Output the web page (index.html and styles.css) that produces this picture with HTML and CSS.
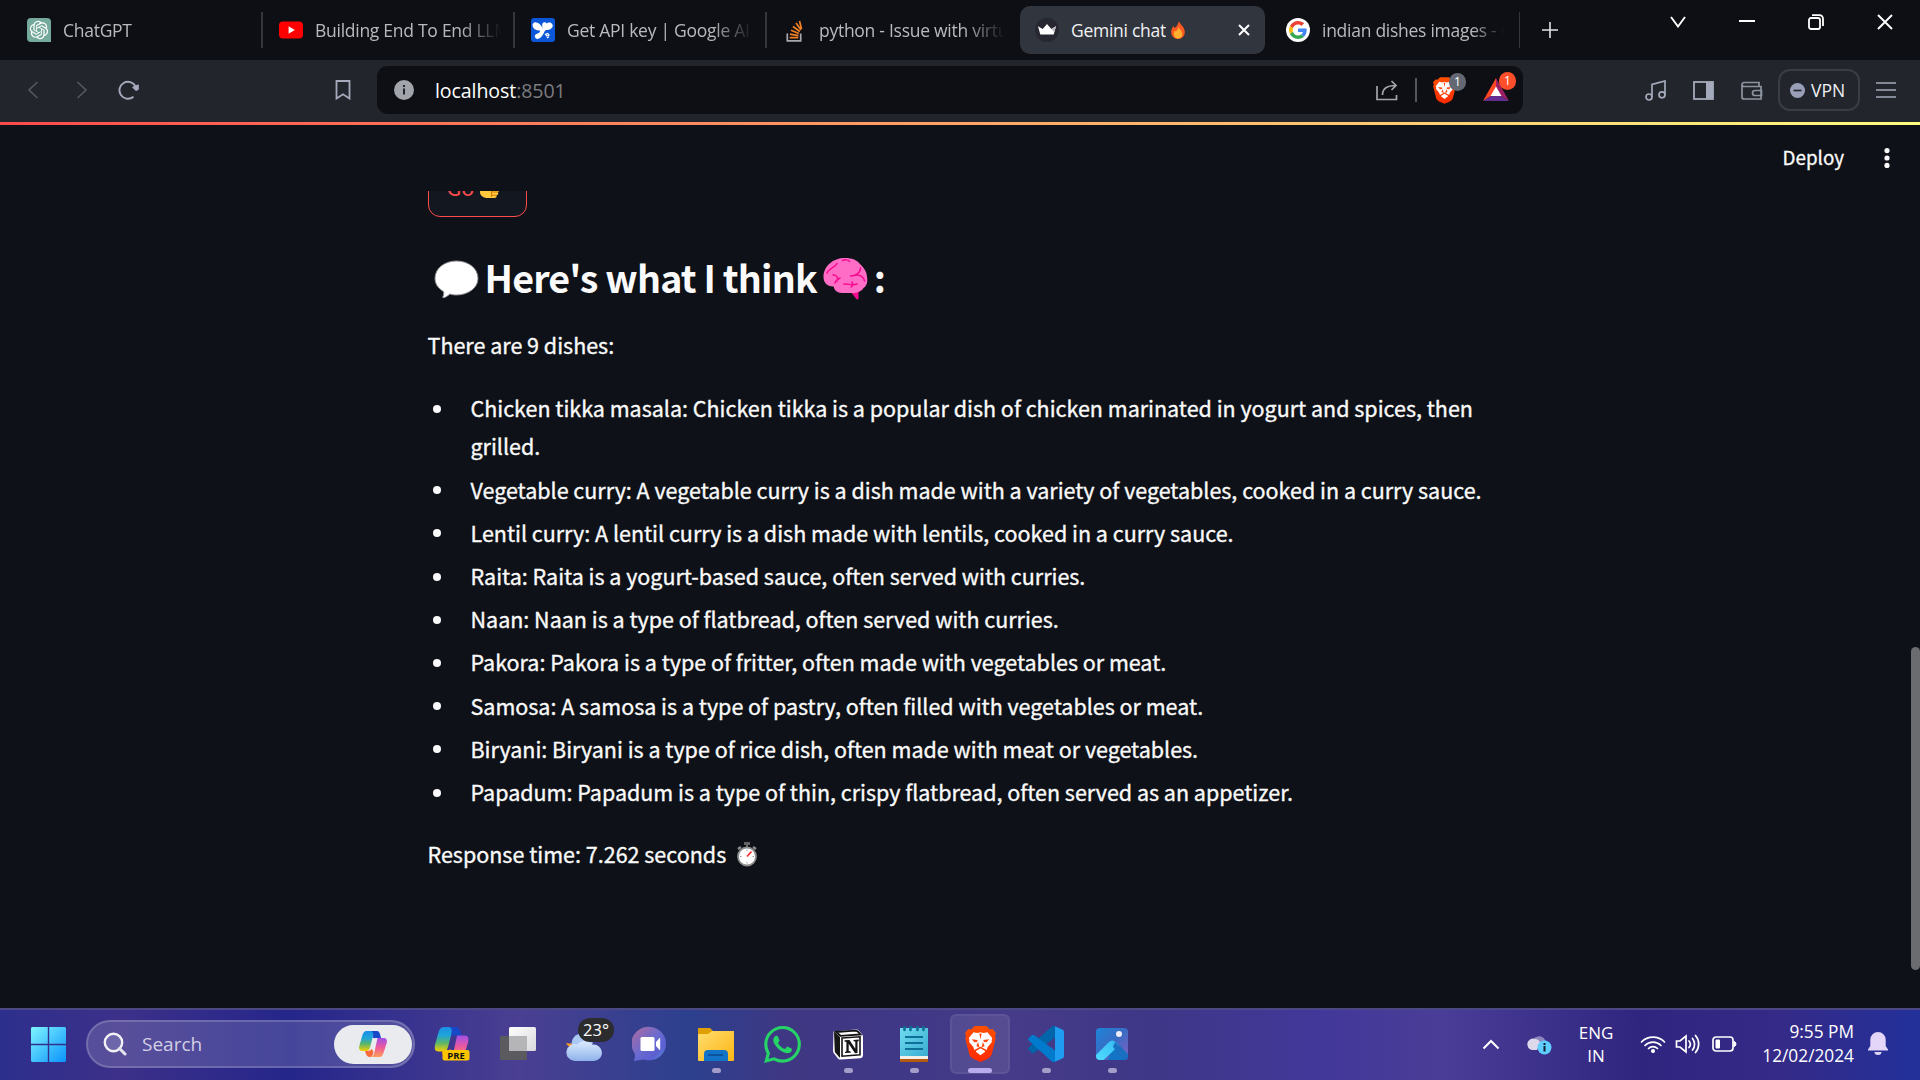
FILE: index.html
```html
<!DOCTYPE html>
<html lang="en">
<head>
<meta charset="utf-8">
<title>Gemini chat</title>
<link rel="stylesheet" href="styles.css">
</head>
<body>
<svg class="defs" aria-hidden="true">
  <defs>
    <linearGradient id="win" gradientUnits="userSpaceOnUse" x1="0" y1="0" x2="35" y2="35"><stop offset="0" stop-color="#7ff5ff"/><stop offset="1" stop-color="#0a93fb"/></linearGradient>
    <linearGradient id="cpA" x1="0" y1="0" x2="0" y2="1"><stop offset="0" stop-color="#1a8fe8"/><stop offset=".35" stop-color="#1fa5d8"/><stop offset=".65" stop-color="#5bb56a"/><stop offset="1" stop-color="#f5d000"/></linearGradient>
    <linearGradient id="cpB" x1="0" y1="0" x2="0" y2="1"><stop offset="0" stop-color="#a04fe8"/><stop offset=".5" stop-color="#ee5a9b"/><stop offset="1" stop-color="#ff9c58"/></linearGradient>
    <linearGradient id="lion" x1="0" y1="0" x2="0" y2="1"><stop offset="0" stop-color="#ff5000"/><stop offset="1" stop-color="#ff2a00"/></linearGradient>
    <linearGradient id="cloud" x1="0" y1="0" x2="0" y2="1"><stop offset="0" stop-color="#dcecff"/><stop offset="1" stop-color="#8fb2ea"/></linearGradient>
    <linearGradient id="teams" x1="0" y1="0" x2="1" y2="1"><stop offset="0" stop-color="#b06a9c"/><stop offset=".5" stop-color="#6a6bd0"/><stop offset=".75" stop-color="#5b5fd0"/><stop offset="1" stop-color="#5a9ee8"/></linearGradient>
    <linearGradient id="folder" x1="0" y1="0" x2="1" y2="1"><stop offset="0" stop-color="#ffdc6e"/><stop offset="1" stop-color="#fcb614"/></linearGradient>
    <linearGradient id="pad" x1="0" y1="0" x2="1" y2="1"><stop offset="0" stop-color="#6fdcf0"/><stop offset="1" stop-color="#39acd0"/></linearGradient>
    <linearGradient id="photo" x1="0" y1="0" x2="1" y2="1"><stop offset="0" stop-color="#1c84d8"/><stop offset=".5" stop-color="#3a6cc4"/><stop offset="1" stop-color="#8a5cc0"/></linearGradient>
    <linearGradient id="hill" x1="0" y1="1" x2="1" y2="0"><stop offset="0" stop-color="#4fdcff"/><stop offset="1" stop-color="#35b8f2"/></linearGradient>
    <linearGradient id="tv" x1="0" y1="0" x2="1" y2="1"><stop offset="0" stop-color="#fff"/><stop offset="1" stop-color="#d8d8dc"/></linearGradient>
    <symbol id="brave" viewBox="0 0 31 36">
      <path fill="url(#lion)" d="M9.500 0h12l3.500 3.600 2.600-.5L31 7l-1 3 .7 2.500-3.900 15.500c-.7 2.300-2 3.500-4 4.800L15.500 36l-7.300-3.200c-2-1.300-3.300-2.500-4-4.800L.3 12.500 1 10 0 7l3.400-3.900 2.600.5z"/>
      <path fill="#fff" d="M8.500 6.300l4 .8 3-.9 3 .9 4-.8 4.700 5.600-.6 2.500.3 1.500-4.200 5.200-1 3-6.200-3.300-6.200 3.300-1-3L4.100 15.900l.3-1.500-.6-2.500z"/>
      <path fill="#fff" d="M15.500 22.300l4.600 2.700-.3 1-4.300 3.300-4.300-3.300-.3-1z"/>
      <path fill="#ff4a12" d="M6.700 13.200l5.900.8-.4 2-2.800.2zM24.300 13.200l-5.900.8.4 2 2.800.2zM14.300 7.500l1.200 6 1.200-6zM11.400 20l1.700-4 1.300 5 1.100.5 1.100-.5 1.300-5 1.700 4-4.100 2.200z"/>
    </symbol>
    <symbol id="copilot" viewBox="0 0 28 26">
      <path fill="url(#cpA)" d="M8 0h9.500c-2.500.6-3 3-3.600 5.500l-2.600 10c-.7 2.500-1.500 4.500-4.300 4.500H3C.3 20-.4 17.500.3 15L3 5.500C4 2 5 0 8 0z"/>
      <path fill="#1748c8" d="M15 0h2.700c2.200 0 3.300 1.800 4.300 7h-3.500c-2.500 0-3.800.6-4.600-.5C14.400 3.500 14.300 1 12.500 0z"/>
      <path fill="url(#cpB)" d="M18.500 7H25c2.700 0 3.400 2.500 2.700 5L25 20.500c-1 3.500-2 5.500-5 5.500h-8c2.500-.6 3-3 3.600-5.500z"/>
      <path fill="#fb6a3c" d="M6 20h3c2.500 0 2.500-1.500 4-2l1.500 3c-.6 3-1.500 5-3.500 5-2.800 0-4-2-5-6z"/>
    </symbol>
  </defs>
</svg>
<div class="screen">
  <header class="tabs">
    <div class="tab">
      <svg class="fav" viewBox="0 0 24 24"><path d="M4 0h16a4 4 0 0 1 4 4v20H4a4 4 0 0 1-4-4V4a4 4 0 0 1 4-4z" fill="#75a99c"/><g transform="translate(2.800 2.800) scale(.765)"><path fill="#fff" d="M22.282 9.821a5.985 5.985 0 0 0-.516-4.911 6.046 6.046 0 0 0-6.510-2.900A6.065 6.065 0 0 0 4.981 4.182a5.985 5.985 0 0 0-3.998 2.900 6.046 6.046 0 0 0 .743 7.097 5.980 5.980 0 0 0 .511 4.911 6.051 6.051 0 0 0 6.515 2.900A5.985 5.985 0 0 0 13.260 24a6.056 6.056 0 0 0 5.772-4.206 5.989 5.989 0 0 0 3.998-2.900 6.056 6.056 0 0 0-.748-7.073zM13.260 22.430a4.476 4.476 0 0 1-2.876-1.041l.142-.080 4.778-2.758a.795.795 0 0 0 .393-.681v-6.737l2.020 1.169a.071.071 0 0 1 .038.061v5.583a4.504 4.504 0 0 1-4.495 4.494zM3.599 18.304a4.471 4.471 0 0 1-.535-3.014l.142.085 4.783 2.758a.771.771 0 0 0 .781 0l5.843-3.368v2.332a.080.080 0 0 1-.033.061L9.740 19.950a4.499 4.499 0 0 1-6.141-1.646zM2.341 7.896a4.485 4.485 0 0 1 2.365-1.973V11.600a.766.766 0 0 0 .388.676l5.814 3.354-2.020 1.169a.076.076 0 0 1-.071 0l-4.830-2.787A4.504 4.504 0 0 1 2.341 7.872zm16.596 3.856L13.104 8.364 15.119 7.200a.076.076 0 0 1 .071 0l4.830 2.791a4.494 4.494 0 0 1-.676 8.104v-5.677a.790.790 0 0 0-.407-.667zm2.011-3.023l-.142-.085-4.774-2.782a.776.776 0 0 0-.785 0L9.409 9.230V6.897a.066.066 0 0 1 .028-.061l4.830-2.787a4.499 4.499 0 0 1 6.680 4.660zM8.307 12.863l-2.020-1.164a.080.080 0 0 1-.038-.057V6.074a4.499 4.499 0 0 1 7.376-3.454l-.142.081L8.704 5.459a.795.795 0 0 0-.393.681zm1.098-2.365l2.602-1.500 2.607 1.500v2.999l-2.597 1.500-2.607-1.500z"/></g></svg>
      <span class="title t1">ChatGPT</span>
    </div>
    <div class="tab">
      <svg class="fav" viewBox="0 0 24 24"><rect y="3.500" width="24" height="17" rx="4" fill="#f00"/><path d="M9.600 8.300l6.200 3.700-6.200 3.700z" fill="#fff"/></svg>
      <span class="title t2">Building End To End LLM</span>
    </div>
    <div class="tab">
      <svg class="fav" viewBox="0 0 24 24"><rect width="24" height="24" rx="3" fill="#0b57d8"/><path fill="#fff" d="M12.300 11.500C10.800 7.500 10.500 4.500 13.500 4.200c1.600-.2 2 .8 2.300 1.300.8-1 3.300-2 5.200.2 2 2.800-.5 5.500-3.300 6-2 .4-2.800 0-3.800 1.300-1.500 2.600-3 6.500-6.500 7.800-1.500.6-4-.5-3.600-3 .3-1.900 2.600-1.700 4.200-3 .9-.7 1.300-1.500 1-2.200-1.500 0-5.700-.3-7.100-3.900C.8 6.400 2.700 4 5 4.400c4 .6 5.800 3.600 7.300 7.100z"/><path d="M14.500 16.200l2.200-.8 1.400 1.700-2.200.9zM16 20l2-1.200" stroke="#fff" stroke-width="1.200" fill="none"/></svg>
      <span class="title t3">Get API key | Google AI</span>
    </div>
    <div class="tab nosep">
      <svg class="fav" viewBox="0 0 24 24"><path d="M4.300 15.500v7.400h13.400v-7.400" fill="none" stroke="#a5aab0" stroke-width="1.700"/><path d="M6.700 19.700h8.600M7 16.200l8.400 1.500M8 12.300l7.900 3.200M10 8.500l6.800 5M13 5l5 7M16.500 3l2 8" fill="none" stroke="#f48024" stroke-width="1.700"/></svg>
      <span class="title t4">python - Issue with virtual</span>
    </div>
    <div class="tab active">
      <svg class="fav" viewBox="0 0 24 24"><circle cx="12" cy="12" r="12" fill="#262730"/><path fill="#fff" d="M3 8.300l4.700 2.600L12 6l4.300 4.900L21 8.300l-2.300 8.300H5.300z"/><path fill="#b9b9bd" d="M12 6l4.300 4.900L21 8.300l-1.700 6z"/></svg>
      <span class="title t5">Gemini chat</span>
      <svg class="fire" viewBox="0 0 14 18"><path fill="#ff5a1f" d="M8 0c.4 3 5.800 6 5.800 11A6.700 6.700 0 0 1 7 18a6.700 6.700 0 0 1-6.800-7C.2 8 1.500 6.500 2.500 5l1 2C6 6 7 3 8 0z"/><path fill="#ffb02e" d="M7.500 6c.5 2 3.800 3.500 3.800 7A4.200 4.200 0 0 1 7 17.500 4.200 4.200 0 0 1 2.700 13c0-1.500.6-2.500 1.300-3.500l.8 1C6 9.500 7 8 7.500 6z"/></svg>
      <svg class="tabx" viewBox="0 0 12 12"><path d="M1 1l10 10M11 1L1 11" stroke="#fff" stroke-width="2"/></svg>
    </div>
    <div class="tab last">
      <svg class="fav" viewBox="0 0 24 24"><circle cx="12" cy="12" r="12" fill="#fff"/><g transform="translate(3 3) scale(.375)"><path fill="#EA4335" d="M24 9.500c3.540 0 6.710 1.220 9.210 3.600l6.850-6.850C35.900 2.380 30.470 0 24 0 14.620 0 6.510 5.380 2.560 13.220l7.980 6.190C12.430 13.720 17.740 9.500 24 9.500z"/><path fill="#4285F4" d="M46.980 24.550c0-1.570-.15-3.090-.38-4.550H24v9.020h12.940c-.58 2.960-2.260 5.480-4.780 7.180l7.730 6c4.510-4.180 7.090-10.360 7.090-17.650z"/><path fill="#FBBC05" d="M10.530 28.590c-.48-1.450-.76-2.990-.76-4.590s.27-3.140.76-4.590l-7.980-6.190C.92 16.460 0 20.120 0 24c0 3.880.92 7.540 2.560 10.780z"/><path fill="#34A853" d="M24 48c6.480 0 11.930-2.130 15.890-5.810l-7.730-6c-2.150 1.450-4.920 2.300-8.160 2.300-6.260 0-11.570-4.220-13.470-9.910l-7.980 6.190C6.510 42.620 14.620 48 24 48z"/></g></svg>
      <span class="title t6">indian dishes images - G</span>
    </div>
    <svg class="plus" viewBox="0 0 16 16"><path d="M8 0v16M0 8h16" stroke="#e4e4e6" stroke-width="1.600"/></svg>
    <div class="winctl">
      <svg width="16" height="12" viewBox="0 0 16 12"><path d="M1 1l7 9.500L15 1" fill="none" stroke="#fff" stroke-width="1.900"/></svg>
      <svg width="16" height="12" viewBox="0 0 16 12"><path d="M0 5h16" stroke="#fff" stroke-width="2"/></svg>
      <svg width="16" height="16" viewBox="0 0 16 16" fill="none" stroke="#fff" stroke-width="1.800"><rect x="1" y="4" width="11" height="11" rx="2"/><path d="M4 1.200h7.500a3.500 3.500 0 0 1 3.500 3.500V12"/></svg>
      <svg width="16" height="16" viewBox="0 0 16 16"><path d="M1 1l14 14M15 1L1 15" stroke="#fff" stroke-width="1.900"/></svg>
    </div>
  </header>

  <nav class="toolbar">
    <svg class="back" width="12" height="18" viewBox="0 0 12 18"><path d="M10.500 1L2 9l8.500 8" fill="none" stroke="#545962" stroke-width="1.600"/></svg>
    <svg class="fwd" width="12" height="18" viewBox="0 0 12 18"><path d="M1.500 1L10 9l-8.500 8" fill="none" stroke="#545962" stroke-width="1.600"/></svg>
    <svg class="reload" width="22" height="20" viewBox="0 0 22 20"><path d="M15.500 16.700A8.500 8.500 0 1 1 17.600 6.500" fill="none" stroke="#a4aabb" stroke-width="1.900"/><path d="M14.600 7.300l5.700-2.500v4.700l-2.500 1z" fill="#a4aabb" stroke="#a4aabb"/></svg>
    <svg class="mark" width="16" height="20" viewBox="0 0 16 20"><path d="M1.500 1h13v17.500L8 14.300l-6.500 4.200z" fill="none" stroke="#a4aabb" stroke-width="1.800"/></svg>
    <div class="address">
      <svg class="info" width="20" height="20" viewBox="0 0 20 20"><circle cx="10" cy="10" r="10" fill="#a1a4ab"/><path d="M10 8.500v6M10 5v2" stroke="#22252c" stroke-width="2"/></svg>
      <span class="url">localhost<i>:8501</i></span>
      <svg class="share" width="22" height="21" viewBox="0 0 22 21"><path d="M1 6v13.500h19.500V15M6.500 15c0-6 4-9.500 13-9.500M15.500 1l4.500 4.500-4.500 4.500" fill="none" stroke="#a3a6ad" stroke-width="1.700"/></svg>
      <span class="vbar"></span>
      <span class="ext brave"><svg width="23" height="27"><use href="#brave"/></svg><b>1</b></span>
      <span class="ext bat"><svg width="28" height="24" viewBox="0 0 28 24"><path d="M14 0v10l-5 8-8 5z" fill="#ff4724"/><path d="M14 0v10l5 8 8 5z" fill="#9e1f63"/><path d="M1 23l8-5h10l8 5z" fill="#662d91"/><path d="M14 8.500l5.500 9.500h-11z" fill="#fff"/></svg><b>1</b></span>
    </div>
    <svg class="music" width="22" height="21" viewBox="0 0 22 21" fill="none" stroke="#a4aabb" stroke-width="1.700"><circle cx="4" cy="17" r="3"/><circle cx="17" cy="14.800" r="3"/><path d="M7 17V4.500L20 1v14"/></svg>
    <svg class="side" width="21" height="19" viewBox="0 0 21 19"><rect x="1" y="1" width="19" height="17" fill="none" stroke="#a4aabb" stroke-width="1.800"/><path d="M13 1h7v17h-7z" fill="#a4aabb"/></svg>
    <svg class="wallet" width="22" height="19" viewBox="0 0 22 19" fill="none" stroke="#8e949f" stroke-width="1.700"><path d="M18 5V1.500H3a2 2 0 0 0-2 2V16a2 2 0 0 0 2 2h17V5.500H3a2 2 0 0 1-2-2M20.500 9.500H14a2.500 2.500 0 0 0 0 5h6.500z"/></svg>
    <div class="vpn"><svg width="15" height="15" viewBox="0 0 15 15"><circle cx="7.500" cy="7.500" r="7.500" fill="#9a9fb8"/><path d="M3.500 7.500h8" stroke="#22252c" stroke-width="1.700"/></svg><span>VPN</span></div>
    <svg class="menu" width="20" height="16" viewBox="0 0 20 16"><path d="M0 1h20M0 8h20M0 15h20" stroke="#a4aabb" stroke-width="1.700"/></svg>
  </nav>
  <div class="ribbon"></div>

  <div class="apphead">
    <span>Deploy</span>
    <svg width="6" height="20" viewBox="0 0 6 20" fill="#fafafa"><circle cx="3" cy="2.600" r="2.600"/><circle cx="3" cy="10" r="2.600"/><circle cx="3" cy="17.400" r="2.600"/></svg>
  </div>
  <main class="content">
    <button class="go"><span>Go</span><svg width="22" height="24" viewBox="0 0 22 24"><path fill="#ffc83d" d="M1 13l6-5 1.500-6c1-2 3.500-1 3.300 1.500L11 9h8c2 0 2.500 2.500 1 3.500 1 1.500.5 3-1 3.500.6 1.500 0 3-1.500 3.300.3 2-.5 2.700-2 2.700H9c-4 0-8-2-8-6z"/><path d="M12.500 12.500h7M12.500 16h6.500M12.500 19.300h5M12.500 11v10" stroke="#d67d00" stroke-width="1.100"/></svg></button>
    <h3>
      <svg class="bubble" width="45" height="39" viewBox="0 0 45 39"><path d="M22.500 1C34 1 44 8 44 18.500 44 28 34 35 22.500 35c-2.500 0-5-.3-6.700-1-1.500 1.500-4 3.500-6.300 3.700-.8 0-1-.7-.5-1.300.9-1.500 1-3.400.4-4.900C4 28 1 24 1 18.500 1 8 11 1 22.500 1z" fill="#fff" stroke="#8b8b8f" stroke-width="1"/></svg>
      <span class="think">Here's what I think</span>
      <svg class="brain" width="45" height="43" viewBox="0 0 45 43"><path d="M27 34h8.500v7c0 2-1.500 2-2.300.8z" fill="#f70a8d"/><path d="M22 1c7 0 12 2 15.500 6.500C41 11 44 15 44 20c1 5-.5 9-3.500 11-2 3.500-6 5-11 5H19c-5 0-8-3-8.200-6.500C5 30 .5 26 .5 20 .5 9 10 1 22 1z" fill="#ff6dc6"/><path d="M14 6.500c-2 4-7 4-10 9.500M19.500 3.500c3-1.500 6-.5 7 1M37.500 11c0 5-5 8-10 8M33 18c4-.5 8 2 8.500 6M10 18c4 0 5 2.500 4.500 6M17 21c-2 1-4 2-5 5M21 27c5-.5 8 2 13 0M29 25l1 3-2 2" fill="none" stroke="#f70a8d" stroke-width="1.500" stroke-linecap="round"/></svg>
      <span>:</span>
    </h3>
    <p class="intro"><span>There are 9 dishes:</span></p>
    <ul>
      <li>Chicken tikka masala: Chicken tikka is a popular dish of chicken marinated in yogurt and spices, then<br>grilled.</li>
      <li>Vegetable curry: A vegetable curry is a dish made with a variety of vegetables, cooked in a curry sauce.</li>
      <li>Lentil curry: A lentil curry is a dish made with lentils, cooked in a curry sauce.</li>
      <li>Raita: Raita is a yogurt-based sauce, often served with curries.</li>
      <li>Naan: Naan is a type of flatbread, often served with curries.</li>
      <li>Pakora: Pakora is a type of fritter, often made with vegetables or meat.</li>
      <li>Samosa: A samosa is a type of pastry, often filled with vegetables or meat.</li>
      <li>Biryani: Biryani is a type of rice dish, often made with meat or vegetables.</li>
      <li>Papadum: Papadum is a type of thin, crispy flatbread, often served as an appetizer.</li>
    </ul>
    <p class="time"><span>Response time: 7.262 seconds</span><svg width="22" height="26" viewBox="0 0 22 26"><path d="M8 1h6v3h-2v2h-2V4H8z" fill="#636363"/><path d="M2 8l3-2M20 8l-3-2" stroke="#8d8d8d" stroke-width="2.500"/><circle cx="11" cy="15.500" r="9" fill="#fff" stroke="#8d8d8d" stroke-width="1.800"/><path d="M11 15.500l4.500-5" stroke="#f8312f" stroke-width="1.800"/><path d="M11 8.500v1.500M11 21v1.500M4 15.500h1.500M16.500 15.500H18" stroke="#9b9b9b"/></svg></p>
    <div class="thumb"></div>
  </main>

  <footer class="taskbar">
    <svg class="start" width="35" height="35" viewBox="0 0 35 35" fill="url(#win)"><path d="M1 0h15.800v16.800H0V1zM18.200 0H34l1 1v15.800H18.200zM0 18.200h16.800V35H1l-1-1zM18.200 18.200H35V34l-1 1H18.200z"/></svg>
    <div class="search">
      <svg width="24" height="24" viewBox="0 0 24 24"><circle cx="10.500" cy="10.500" r="8.700" fill="#6d66aa" stroke="#f2f2f5" stroke-width="2.400"/><path d="M16.500 16.500l5.500 5.500" stroke="#e6e6ec" stroke-width="3" stroke-linecap="round"/></svg>
      <span>Search</span>
      <div class="pill"><svg width="28" height="26"><use href="#copilot"/></svg></div>
    </div>
    <div class="apps">
      <div class="app"><svg width="36" height="36" viewBox="0 0 36 36"><g transform="translate(.5 1) scale(1.220)"><use href="#copilot" width="28" height="26"/></g><rect x="8.500" y="24" width="27" height="10.500" rx="2" fill="#fdc500"/><text x="22" y="32.600" text-anchor="middle" class="pre">PRE</text></svg></div>
      <div class="app"><svg width="36" height="36" viewBox="0 0 36 36"><rect y="10" width="27" height="24" rx="1.500" fill="#5b5b5f"/><rect x="9" y="1" width="27" height="24" rx="1.500" fill="url(#tv)"/><path d="M9 10h18v15H10.500L9 23.500z" fill="#b5b5b8"/></svg></div>
      <div class="app weather"><svg width="36" height="36" viewBox="0 0 36 36"><path d="M13.500 6c1 7-4 13-13.500 11 2 4 6 6 10 5 6-1 9-8 3.500-16z" fill="#f79a2c"/><path d="M6 20a9.500 9.500 0 0 1 18.500-5.500A8 8 0 0 1 27 17l-6 9z" fill="#a9c8f4"/><path d="M9 35a8.500 8.500 0 1 1 2.500-16.600 9.500 9.500 0 0 1 15 .3A8.200 8.200 0 1 1 27.500 35z" fill="url(#cloud)"/></svg><em>23°</em></div>
      <div class="app"><svg width="36" height="36" viewBox="0 0 36 36"><path d="M18.500 1A16.700 16.700 0 1 1 12 33.500L1.500 35c1.500-2 1.800-5 1.200-7.500A16.700 16.700 0 0 1 18.500 1z" fill="url(#teams)"/><rect x="8.500" y="11" width="14" height="14" rx="1.500" fill="#fff"/><path d="M24 16l3.500-4h.7v12h-.7L24 20z" fill="#fff"/></svg></div>
      <div class="app run"><svg width="36" height="36" viewBox="0 0 36 36"><path d="M0 2h12l3 3v6H0z" fill="#e09f00"/><path d="M0 8h10l4-3h22v29a1 1 0 0 1-1 1H1a1 1 0 0 1-1-1z" fill="url(#folder)"/><path d="M6 35V28a4 4 0 0 1 4-4h16a4 4 0 0 1 4 4v7z" fill="#1274c8"/><path d="M10.500 29h14" stroke="#0a4a8c" stroke-width="1.500" stroke-linecap="round"/></svg></div>
      <div class="app"><svg width="37" height="37" viewBox="0 0 24 24"><path fill="#25d366" d="M17.472 14.382c-.297-.149-1.758-.867-2.030-.967-.273-.099-.471-.148-.670.150-.197.297-.767.966-.940 1.164-.173.199-.347.223-.644.075-.297-.150-1.255-.463-2.390-1.475-.883-.788-1.480-1.761-1.653-2.059-.173-.297-.018-.458.130-.606.134-.133.298-.347.446-.520.149-.174.198-.298.298-.497.099-.198.050-.371-.025-.520-.075-.149-.669-1.612-.916-2.207-.242-.579-.487-.500-.669-.510-.173-.008-.371-.010-.570-.010-.198 0-.520.074-.792.372-.272.297-1.040 1.016-1.040 2.479 0 1.462 1.065 2.875 1.213 3.074.149.198 2.096 3.200 5.077 4.487.709.306 1.262.489 1.694.625.712.227 1.360.195 1.871.118.571-.085 1.758-.719 2.006-1.413.248-.694.248-1.289.173-1.413-.074-.124-.272-.198-.570-.347m-5.421 7.403h-.004a9.870 9.870 0 0 1-5.031-1.378l-.361-.214-3.741.982.998-3.648-.235-.374a9.860 9.860 0 0 1-1.510-5.260c.001-5.450 4.436-9.884 9.888-9.884 2.640 0 5.122 1.030 6.988 2.898a9.825 9.825 0 0 1 2.893 6.994c-.003 5.450-4.437 9.884-9.885 9.884m8.413-18.297A11.815 11.815 0 0 0 12.050 0C5.495 0 .160 5.335.157 11.892c0 2.096.547 4.142 1.588 5.945L.057 24l6.305-1.654a11.882 11.882 0 0 0 5.683 1.448h.005c6.554 0 11.890-5.335 11.893-11.893a11.821 11.821 0 0 0-3.480-8.413z"/></svg></div>
      <div class="app run"><svg width="36" height="36" viewBox="0 0 36 36"><path d="M3.500 5.500L25 3.500c2-.2 3 .2 4.200 1.500l3 3.500c.6.700.8 1.300.8 2.500v18c0 2-1 3-3 3.200L11 33.500c-1.500.1-2.500-.4-3.500-1.600l-3.700-4.600c-.6-.8-.8-1.500-.8-2.500z" fill="#fff"/><path d="M6 6l19-1.300c1 0 2 .2 3 1l2.500 2.800-20 1.300z" fill="#fff" stroke="#111" stroke-width="1.800"/><path d="M4 5.500l6 5.500v21l-5.200-6z" fill="#161616"/><path d="M12 12l18-1.200v18L12 30.200z" fill="#fff" stroke="#161616" stroke-width="1.600"/><path d="M14.500 14.300l5-.3 5.800 8.800V15.600l-1.800-.4v-1.300l5.300-.3v1.300l-1.300.5v11.500l-2.500.3-6.300-9.500V25l2 .5v1.200l-5.700.4v-1.200l1.400-.6V16l-1.900-.4z" fill="#161616"/></svg></div>
      <div class="app run"><svg width="36" height="36" viewBox="0 0 36 36"><path d="M4 2h28v28H4z" fill="url(#pad)"/><path d="M4 30h28v3H4z" fill="#f2efe9"/><path d="M4 33h28v2a1 1 0 0 1-1 1H5a1 1 0 0 1-1-1z" fill="#b5590e"/><path d="M8.500 1v3M14.500 1v3M21.500 1v3M27.500 1v3" stroke="#0c6f94" stroke-width="2.600" stroke-linecap="round"/><path d="M9 11h18M9 17h18M9 23h18" stroke="#0c7098" stroke-width="2"/></svg></div>
      <div class="app run on"><svg width="31" height="36"><use href="#brave"/></svg></div>
      <div class="app run"><svg width="36" height="36" viewBox="0 0 36 36"><path d="M27 .3v11.200L6.300 26.700a2 2 0 0 1-2.500 0L.7 24a1.800 1.800 0 0 1 0-2.600L23.500.8C25-.3 26-.2 27 .3z" fill="#0065a9"/><path d="M27 35.700V24.500L6.300 9.300a2 2 0 0 0-2.500 0L.7 12a1.800 1.800 0 0 0 0 2.600l22.800 20.600c1.500 1.100 2.500 1 3.500.5z" fill="#007acc"/><path d="M27 .3l7.300 3.200c1.200.6 1.700 1.300 1.700 2.500v24c0 1.200-.5 2-1.700 2.500L27 35.700z" fill="#1f9cf0"/></svg></div>
      <div class="app run"><svg width="32" height="32" viewBox="0 0 32 32"><rect width="32" height="32" rx="4" fill="url(#photo)"/><path d="M16 19l4-5 12 12v2a4 4 0 0 1-4 4H12z" fill="#1373c4"/><path d="M0 27l13-13c2-2 4.500-2 6.500 0L23 17.500 7.500 32H4a4 4 0 0 1-4-4z" fill="url(#hill)"/><path d="M19 14l13 13v1a4 4 0 0 1-4 4L17 19z" fill="#1a6fc0"/><circle cx="23" cy="6" r="3" fill="#f0ecf8"/></svg></div>
    </div>
    <div class="tray">
      <svg class="up" width="18" height="11" viewBox="0 0 18 11"><path d="M1.500 9.500L9 2l7.500 7.500" fill="none" stroke="#fff" stroke-width="2"/></svg>
      <svg class="sync" width="26" height="22" viewBox="0 0 26 22"><path d="M6 9a7 7 0 0 1 13-2 5 5 0 0 1 2 4l-8 5z" fill="#8f88bd"/><path d="M6 17A5.700 5.700 0 1 1 8 5.700c3 0 5 1.300 6.500 4L11 17z" fill="#ddd9ea"/><circle cx="18.500" cy="14.500" r="7" fill="#60cdff"/><path d="M18.500 13v5.500M18.500 10v2" stroke="#102030" stroke-width="2"/></svg>
      <div class="lang"><span>ENG</span><span>IN</span></div>
      <svg class="wifi" width="26" height="18" viewBox="0 0 26 18" fill="none" stroke="#fff" stroke-width="1.700" stroke-linecap="round"><path d="M1.500 7a16.200 16.200 0 0 1 23 0M5 10.500a11.300 11.300 0 0 1 16 0M8.500 13.500a6.500 6.500 0 0 1 9 0"/><circle cx="13" cy="16" r="1.200" fill="#fff"/></svg>
      <svg class="vol" width="26" height="20" viewBox="0 0 26 20" fill="none" stroke="#fff" stroke-width="1.700" stroke-linecap="round"><path d="M1.500 7v6H5l6 5V2L5 7zM14 7a5 5 0 0 1 0 6.500M17.500 4.500a9 9 0 0 1 0 11.500M20.500 1.500a13 13 0 0 1 0 17"/></svg>
      <svg class="batt" width="25" height="16" viewBox="0 0 25 16"><rect x="1" y="1" width="20" height="14" rx="3" fill="none" stroke="#fff" stroke-width="1.700"/><rect x="3.500" y="3.500" width="4.500" height="9" rx="1" fill="#fff"/><path d="M22 5.500c2.500 0 2.500 5 0 5z" fill="#fff" stroke="#fff"/></svg>
      <div class="clock"><span>9:55 PM</span><span>12/02/2024</span></div>
      <svg class="bell" width="20" height="24" viewBox="0 0 20 24" fill="#e4d6f8"><path d="M10 0a7.700 7.700 0 0 1 7.700 7.700V14L20 17.500v1H0v-1L2.300 14V7.700A7.700 7.700 0 0 1 10 0zM6.500 20h7a3.500 3 0 0 1-7 0z"/></svg>
    </div>
  </footer>
</div>
</body>
</html>
```
FILE: styles.css
```css
* { box-sizing: border-box; }
body { margin: 0; background: #0e1117; overflow: hidden; font-family: "Open Sans", sans-serif; }
svg { display: block; flex: none; }
.defs { position: absolute; width: 0; height: 0; }
.screen { width: 1920px; height: 1080px; display: flex; flex-direction: column; }

.tabs { height: 60px; flex: none; background: #0e0f14; display: flex; align-items: center; padding-left: 11px; }
.tab { width: 252px; height: 36px; flex: none; display: flex; align-items: center; padding-left: 16px; border-right: 2px solid #34363b; }
.tab.nosep { border-color: transparent; }
.tab.active { width: 245px; height: 48px; margin-left: 1px; padding: 0 15px 0 15px; border: 0; border-radius: 10px; background: #31353e; }
.tab.last { width: 253px; margin-left: 2px; padding-left: 19px; border-width: 1px; }
.fav { width: 24px; height: 24px; margin-right: 12px; }
.title { font-size: 17.500px; letter-spacing: -.27px; line-height: 24px; color: #b9babd; white-space: nowrap; flex: 0 0 186px; overflow: hidden; -webkit-mask-image: linear-gradient(90deg, #000 145px, transparent 186px); mask-image: linear-gradient(90deg, #000 145px, transparent 186px); }
.t6 { -webkit-mask-image: linear-gradient(90deg, #000 150px, transparent 182px); mask-image: linear-gradient(90deg, #000 150px, transparent 182px); }
.active .title { color: #f2f2f4; flex: none; -webkit-mask-image: none; mask-image: none; }
.fire { width: 14px; height: 18px; margin-left: 5px; }
.tabx { width: 12px; height: 12px; margin-left: auto; }
.plus { width: 16px; height: 16px; margin-left: 22px; }
.winctl { margin-left: auto; margin-right: 27px; display: flex; gap: 53px; align-items: center; align-self: flex-start; height: 43px; }

.toolbar { height: 62px; flex: none; background: #22252c; display: flex; align-items: center; padding-bottom: 2px; }
.back { margin-left: 27px; }
.fwd { margin-left: 37px; }
.reload { margin-left: 30px; }
.mark { margin-left: 195px; }
.address { width: 1146px; height: 48px; margin-left: 26px; border-radius: 11px; background: #0e0f14; display: flex; align-items: center; padding-left: 17px; }
.url { margin: 1px 0 0 21px; font-size: 19.600px; letter-spacing: -.1px; line-height: 26px; color: #fff; }
.url i { font-style: normal; color: #7a7c80; }
.share { margin-left: auto; }
.vbar { width: 2px; height: 24px; background: #54565b; margin: 0 16px 0 17px; }
.ext { position: relative; }
.brave { width: 26px; }
.bat { margin-left: 23px; margin-right: 13px; }
.ext b { position: absolute; left: 16px; top: -4px; width: 17px; height: 18px; border-radius: 9px; background: #636873; color: #fff; font-size: 12px; line-height: 18px; text-align: center; font-weight: 400; }
.bat b { background: #ff4f2a; top: -6px; left: 17px; }
.music { margin-left: 122px; }
.side { margin-left: 26px; }
.wallet { margin-left: 27px; }
.vpn { margin-left: 15px; width: 82px; height: 42px; border: 2px solid #393d46; border-radius: 12px; display: flex; align-items: center; gap: 6px; padding-left: 10px; color: #f0f0f2; font-size: 17.500px; }
.menu { margin-left: 16px; }
.ribbon { height: 3px; flex: none; background: linear-gradient(90deg, #ff4b4b, #fffd80); }

.apphead { height: 66px; flex: none; display: flex; justify-content: flex-end; align-items: center; gap: 40px; padding: 0 30px 1px 0; color: #fafafa; font: 400 18.800px "Noto Sans CJK SC", sans-serif; -webkit-text-stroke: .3px #fafafa; }
.apphead span { margin-top: -2px; }
.content { flex: none; height: 817px; position: relative; overflow: hidden; padding-left: 427.500px; font: 400 21.500px/38.400px "Noto Sans CJK SC", sans-serif; color: #fafafa; -webkit-text-stroke: .35px #fafafa; }
.go { display: flex; align-items: center; gap: 5px; width: 99px; height: 58px; margin-top: -32px; padding: 0 0 1px 18px; border: 1.500px solid #ff4b4b; border-radius: 12px; background: #131720; color: #ff4b4b; font: inherit; -webkit-text-stroke: 0; }
h3 { display: flex; align-items: center; height: 50px; margin: 36px 0 0; font-size: 37.600px; line-height: 50px; font-weight: 700; white-space: pre; -webkit-text-stroke: 0; }
h3 span { margin-top: -2px; }
.think { letter-spacing: -.82px; }
.bubble { margin: 2px 6px 0 6px; }
.brain { margin: 0 6px 0 6px; }
p { margin: 0; white-space: nowrap; }
.intro { margin-top: 23px; }
ul { margin: 24.600px 0 0; padding: 0; list-style: none; }
li { position: relative; padding-left: 43px; margin-bottom: 4.800px; white-space: nowrap; letter-spacing: -.01px; }
li::before { content: ""; position: absolute; left: 5px; top: 15.500px; width: 8px; height: 8px; border-radius: 50%; background: #fafafa; }
.time { margin-top: 23.300px; display: flex; align-items: center; gap: 10px; }
.thumb { position: absolute; right: 0; top: 456px; width: 9px; height: 323px; border-radius: 5px; background: #6b6c70; }

.taskbar { flex: 1; border-top: 2px solid #4c4883; padding-bottom: 2px; display: flex; align-items: center; background: linear-gradient(90deg, #2d2f8d 0, #3c3089 120px, #25268a 290px, #4a3f92 520px, #2c408e 690px, #403783 790px, #3f3886 900px, #463b88 1010px, #3e3787 1150px, #42389a 1320px, #4a3d97 1440px, #2f257f 1640px, #352a87 1780px, #22309a 1920px); }
.start { margin-left: 31px; }
.search { width: 329px; height: 48px; margin-left: 20px; border: 2px solid rgba(255,255,255,.18); border-radius: 24px; background: rgba(255,255,255,.15); display: flex; align-items: center; padding: 0 1px 0 15px; }
.search span { margin-left: 15px; font-size: 19px; color: #d3cfe6; }
.pill { margin-left: auto; width: 78px; height: 39px; border-radius: 20px; background: #e9ebee; display: flex; align-items: center; justify-content: center; }
.apps { display: flex; gap: 6px; margin-left: 7px; }
.app { position: relative; width: 60px; height: 60px; display: flex; align-items: center; justify-content: center; border-radius: 6px; }
.app.on { background: rgba(255,255,255,.09); box-shadow: inset 0 0 0 2px rgba(255,255,255,.05); }
.run::after { content: ""; position: absolute; left: 26px; bottom: 1px; width: 9px; height: 5px; border-radius: 3px; background: #a49dca; }
.on::after { left: 18px; width: 24px; background: #b9abee; }
.pre { font: 700 9.500px "Open Sans", sans-serif; fill: #111; }
.weather em { position: absolute; left: 24px; top: 4px; width: 36px; height: 24px; border-radius: 12px; background: #2c2c2e; color: #fff; font-style: normal; font-size: 16.500px; line-height: 24px; text-align: center; }
.tray { margin-left: auto; display: flex; align-items: center; color: #fff; font-size: 17px; line-height: 23px; }
.sync { margin-left: 26px; }
.lang { margin-left: 22px; width: 44px; display: flex; flex-direction: column; align-items: center; }
.wifi { margin-left: 22px; }
.vol { margin-left: 9px; }
.batt { margin-left: 11px; }
.clock { margin-left: 11px; width: 106px; display: flex; flex-direction: column; align-items: flex-end; font-size: 17.300px; line-height: 24px; }
.bell { margin: 0 32px 0 14px; }
```
